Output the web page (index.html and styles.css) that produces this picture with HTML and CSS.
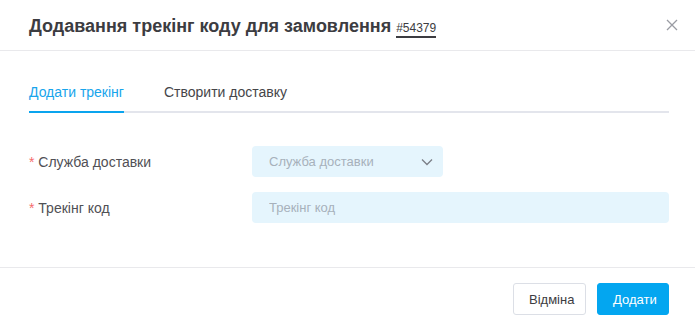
FILE: index.html
```html
<!DOCTYPE html>
<html lang="uk">

<head>
    <meta charset="UTF-8">
    <meta name="viewport" content="width=device-width, initial-scale=1.0">
    <title>Додавання трекінг коду</title>
    <link rel="stylesheet" href="styles.css">
</head>

<body>

    <div class="modal">
        <!-- Header -->
        <div class="modal-header">
            <h2 class="modal-title">Додавання трекінг коду для замовлення <span class="order-num">#54379</span></h2>
            <button class="close-btn" aria-label="Закрити">
                <svg width="12" height="12" viewBox="0 0 12 12">
                    <path d="M1 1 L11 11 M11 1 L1 11" stroke="#9a9ca3" stroke-width="1.3" fill="none" />
                </svg>
            </button>
        </div>

        <!-- Body -->
        <div class="modal-body">
            <div class="tabs">
                <div class="tab active">Додати трекінг</div>
                <div class="tab">Створити доставку</div>
            </div>

            <div class="form">
                <div class="form-row">
                    <label class="form-label"><span class="req">*</span> Служба доставки</label>
                    <div class="select">
                        <span class="placeholder">Служба доставки</span>
                        <svg width="12" height="8" viewBox="0 0 12 8">
                            <path d="M1 1.5 L6 6.5 L11 1.5" stroke="#7b7f87" stroke-width="1.3" fill="none" />
                        </svg>
                    </div>
                </div>
                <div class="form-row">
                    <label class="form-label"><span class="req">*</span> Трекінг код</label>
                    <input class="input" type="text" placeholder="Трекінг код">
                </div>
            </div>
        </div>

        <!-- Footer -->
        <div class="modal-footer">
            <button class="btn btn-default">Відміна</button>
            <button class="btn btn-primary">Додати</button>
        </div>
    </div>

</body>

</html>
```

FILE: styles.css
```css
body {
    margin: 0;
    background: #fff;
    font-family: "Liberation Sans", Arial, sans-serif;
    color: #4a4a4f;
}

.modal {
    width: 695px;
    height: 327px;
    background: #fff;
}

.modal-header {
    display: flex;
    align-items: center;
    justify-content: space-between;
    height: 51px;
    padding: 0 17px 0 29px;
    border-bottom: 1px solid #e9e9ec;
    box-sizing: border-box;
}

.modal-title {
    margin: 0;
    padding-top: 3px;
    font-size: 18px;
    font-weight: bold;
    color: #3c3c41;
}

.order-num {
    font-size: 12px;
    font-weight: normal;
    color: #3c3c41;
    border-bottom: 2px solid #3c3c41;
    padding-bottom: 1px;
}

.close-btn {
    border: 0;
    background: none;
    padding: 0;
    margin-top: -1px;
    display: flex;
    cursor: pointer;
}

.modal-body {
    padding: 30px 26px 0 29px;
    height: 217px;
    box-sizing: border-box;
    border-bottom: 1px solid #e9e9ec;
}

.tabs {
    display: flex;
    gap: 40px;
    border-bottom: 2px solid #e3e5ec;
}

.tab {
    font-size: 14px;
    color: #454549;
    padding: 3px 0 11px;
    margin-bottom: -2px;
    border-bottom: 2px solid transparent;
}

.tab.active {
    color: #18a5ec;
    border-bottom-color: #0aa4ee;
}

.form {
    padding-top: 33px;
    display: flex;
    flex-direction: column;
    gap: 15px;
}

.form-row {
    display: flex;
    align-items: center;
}

.form-label {
    width: 223px;
    font-size: 14px;
    color: #505055;
}

.req {
    color: #f56c6c;
}

.select,
.input {
    height: 31px;
    box-sizing: border-box;
    background: #e5f5fd;
    border: 0;
    border-radius: 4px;
    font-family: inherit;
    font-size: 13px;
    padding: 0 17px;
}

.select {
    width: 191px;
    display: flex;
    align-items: center;
    justify-content: space-between;
    padding-right: 10px;
}

.placeholder {
    color: #a7b1bb;
}

.input {
    flex: 1;
    outline: none;
}

.input::placeholder {
    color: #a7b1bb;
}

.modal-footer {
    display: flex;
    justify-content: flex-end;
    gap: 11px;
    padding: 15px 26px 0 0;
}

.btn {
    height: 32px;
    border-radius: 3px;
    font-family: inherit;
    font-size: 13px;
    padding: 0 15px;
    cursor: pointer;
}

.btn-default {
    width: 73px;
    background: #fff;
    border: 1px solid #dcdfe6;
    color: #3c3c41;
}

.btn-primary {
    width: 72px;
    background: #03a6f0;
    border: 1px solid #03a6f0;
    color: #fff;
}
```
